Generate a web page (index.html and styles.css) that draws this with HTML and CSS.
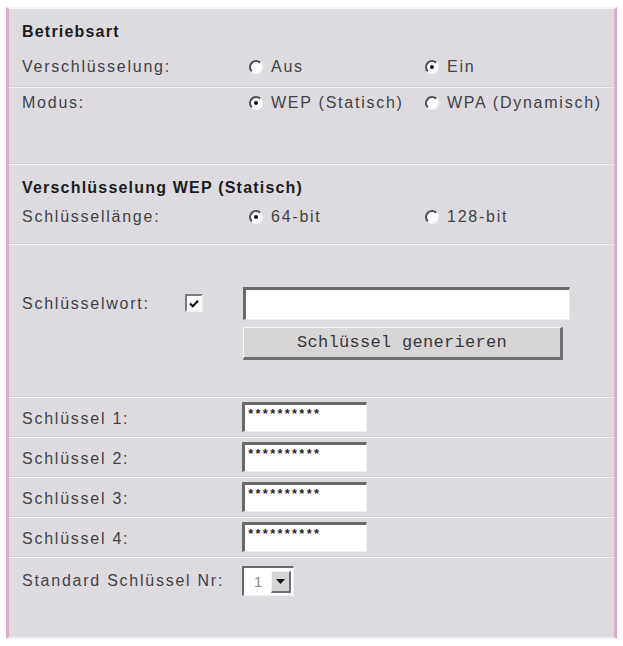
FILE: index.html
```html
<!DOCTYPE html>
<html lang="de">
<head>
<meta charset="utf-8">
<title>WLAN Verschlüsselung</title>
<link rel="stylesheet" href="styles.css">
</head>
<body>
<div class="panel">
  <div class="head head-first">Betriebsart</div>
  <div class="row row-versch">
    <span class="label">Verschlüsselung:</span>
    <span class="opt"><span class="radio"></span>Aus</span>
    <span class="opt"><span class="radio on"></span>Ein</span>
  </div>
  <div class="sep"></div>
  <div class="row row-modus">
    <span class="label">Modus:</span>
    <span class="opt"><span class="radio on"></span>WEP (Statisch)</span>
    <span class="opt"><span class="radio"></span>WPA (Dynamisch)</span>
  </div>
  <div class="spacer-modus"></div>
  <div class="sep"></div>

  <div class="head">Verschlüsselung WEP (Statisch)</div>
  <div class="row row-len">
    <span class="label">Schlüssellänge:</span>
    <span class="opt"><span class="radio on"></span>64-bit</span>
    <span class="opt"><span class="radio"></span>128-bit</span>
  </div>
  <div class="sep"></div>

  <div class="keyword">
    <span class="label kw-label">Schlüsselwort:</span>
    <span class="checkbox">
      <svg width="10" height="9" viewBox="0 0 10 9"><path d="M1 4.5 L3.8 7.2 L9 1.8" fill="none" stroke="#111" stroke-width="2.2"/></svg>
    </span>
    <div class="kw-fields">
      <div class="textbox wide"></div>
      <div class="button">Schlüssel generieren</div>
    </div>
  </div>
  <div class="sep"></div>

  <div class="row keyrow"><span class="label">Schlüssel 1:</span><div class="textbox key">**********</div></div>
  <div class="sep"></div>
  <div class="row keyrow"><span class="label">Schlüssel 2:</span><div class="textbox key">**********</div></div>
  <div class="sep"></div>
  <div class="row keyrow"><span class="label">Schlüssel 3:</span><div class="textbox key">**********</div></div>
  <div class="sep"></div>
  <div class="row keyrow"><span class="label">Schlüssel 4:</span><div class="textbox key">**********</div></div>
  <div class="sep"></div>
  <div class="row stdrow">
    <span class="label">Standard Schlüssel Nr:</span>
    <div class="select"><span class="sel-val">1</span><span class="sel-btn"><svg width="9" height="5" viewBox="0 0 9 5"><path d="M0 0 H9 L4.5 5 Z" fill="#111"/></svg></span></div>
  </div>
</div>
</body>
</html>
```

FILE: styles.css
```css
html, body {
  margin: 0;
  padding: 0;
  background: #ffffff;
}

body {
  font-family: "Liberation Sans", Arial, sans-serif;
  font-size: 16px;
  letter-spacing: 1.75px;
  color: #424246;
}

.panel {
  box-sizing: border-box;
  width: 611px;
  height: 632px;
  margin: 7px 0 0 6px;
  background: #dddbe0;
  border-left: 3px solid #e0abca;
  border-right: 3px solid #e0abca;
  border-top: 2px solid #f3f2f5;
  border-bottom: 2px solid #f1f0f3;
}

.head {
  padding: 13px 0 5px 13px;
  line-height: 20px;
  font-weight: bold;
  letter-spacing: 1.2px;
  color: #1c1c1e;
}

.row {
  display: grid;
  grid-template-columns: 227px 176px 1fr;
  align-items: center;
  padding-left: 13px;
}

.row-versch { height: 39px; }
.row-modus { height: 30px; }
.spacer-modus { height: 45px; }
.row-len { height: 28px; padding-bottom: 12px; }

.opt {
  display: flex;
  align-items: center;
  gap: 8px;
}

.radio {
  position: relative;
  box-sizing: border-box;
  width: 14px;
  height: 14px;
  border-radius: 50%;
  background: #ffffff;
  border: 2px solid;
  border-color: #4e4e50 #f6f6f7 #f6f6f7 #4e4e50;
  flex: none;
}

.radio.on::after {
  content: "";
  position: absolute;
  left: 3px;
  top: 3px;
  width: 4px;
  height: 4px;
  border-radius: 50%;
  background: #111;
}

.sep {
  height: 2px;
  box-sizing: border-box;
  border-top: 1px solid #d0cdd3;
  background: #f1f0f3;
}

.keyword {
  display: grid;
  grid-template-columns: 163px 58px 1fr;
  align-items: start;
  padding: 42px 0 36px 13px;
}

.kw-label {
  line-height: 33px;
}

.checkbox {
  box-sizing: border-box;
  margin-top: 7px;
  width: 18px;
  height: 18px;
  background: #ffffff;
  border: 2px solid;
  border-color: #7a7a7c #f2f2f3 #f2f2f3 #7a7a7c;
  display: flex;
  align-items: center;
  justify-content: center;
}

.kw-fields {
  display: flex;
  flex-direction: column;
  gap: 7px;
}

.textbox {
  box-sizing: border-box;
  background: #ffffff;
  border-style: solid;
  border-width: 3px 1px 1px 3px;
  border-color: #6a6a6c #efeff0 #efeff0 #6a6a6c;
}

.textbox.wide {
  width: 327px;
  height: 33px;
}

.button {
  box-sizing: border-box;
  width: 320px;
  height: 33px;
  background: #d7d5d6;
  border-style: solid;
  border-width: 1px 3px 3px 1px;
  border-color: #f4f4f4 #6e6e70 #6e6e70 #f4f4f4;
  font-family: "Liberation Mono", "Courier New", monospace;
  font-size: 17px;
  letter-spacing: 0.3px;
  color: #38383a;
  display: flex;
  align-items: center;
  justify-content: center;
}

.keyrow {
  grid-template-columns: 220px 1fr;
  height: 38px;
}

.keyrow .label {
  padding-top: 4px;
}

.textbox.key {
  width: 125px;
  height: 30px;
  padding: 5px 0 0 2px;
  font-family: "Liberation Mono", "Courier New", monospace;
  font-size: 12.5px;
  font-weight: bold;
  line-height: 10px;
  letter-spacing: -0.2px;
  color: #222;
}

.stdrow {
  grid-template-columns: 220px 1fr;
  height: 46px;
}

.select {
  box-sizing: border-box;
  width: 52px;
  height: 30px;
  display: flex;
  align-items: center;
  background: #ffffff;
  border-style: solid;
  border-width: 2px 1px 1px 2px;
  border-color: #6a6a6c #efeff0 #efeff0 #6a6a6c;
  padding: 0 2px 0 0;
}

.sel-val {
  flex: 1;
  padding-left: 10px;
  color: #8a8a8e;
  font-size: 15px;
}

.sel-btn {
  box-sizing: border-box;
  width: 20px;
  height: 22px;
  background: #d6d4d5;
  border-style: solid;
  border-width: 1px 2px 2px 1px;
  border-color: #f4f4f4 #6e6e70 #6e6e70 #f4f4f4;
  display: flex;
  align-items: center;
  justify-content: center;
}
```
